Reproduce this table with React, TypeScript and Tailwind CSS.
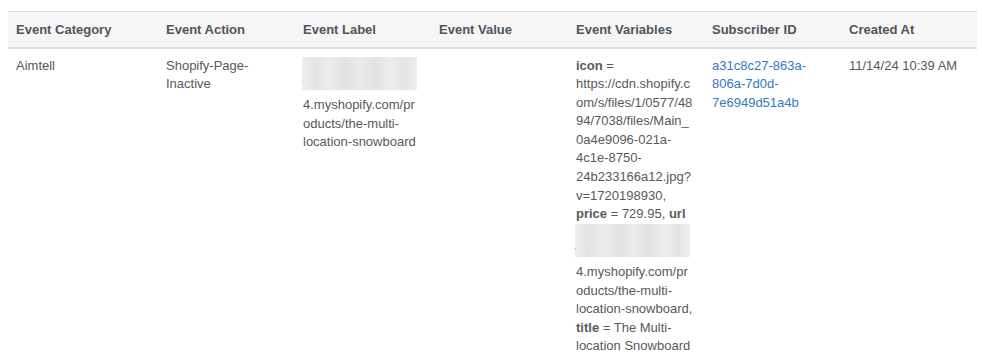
import React from "react";

const Blur = () => (
  <div className="relative h-[39.5px]">
    <div className="absolute left-[-1px] top-[0px] h-[33px] w-[115px] bg-[linear-gradient(90deg,#eeeeee,#e4e4e4_12%,#ececec_24%,#e2e2e2_38%,#eaeaea_50%,#e3e3e3_64%,#ededed_78%,#e4e4e4_90%,#efefef)] blur-[0.6px]" />
    <div className="absolute left-[-1px] top-[24px] h-[1px] w-[1px] bg-[#b5b5b5]" />
  </div>
);

const L = ({ children }: { children: React.ReactNode }) => <div className="whitespace-nowrap">{children}</div>;

export default function App() {
  const th = "text-left align-top font-bold text-[#4f555c] px-2 pt-[9px] pb-[7px]";
  const td = "align-top px-2 pt-2 pb-2";
  return (
    <div
      className="bg-white pl-2 pt-[11px] w-[982px] h-[363px] overflow-hidden text-[13px] leading-[18.57px] text-[#595959]"
      style={{ fontFamily: '"Liberation Sans", Helvetica, Arial, sans-serif' }}
    >
      <table className="w-[969px] table-fixed border-collapse">
        <colgroup>
          <col className="w-[150px]" />
          <col className="w-[137px]" />
          <col className="w-[136px]" />
          <col className="w-[137px]" />
          <col className="w-[136px]" />
          <col className="w-[137px]" />
          <col className="w-[136px]" />
        </colgroup>
        <thead>
          <tr className="bg-[#f6f6f6] border-t border-t-[#dddddd] border-b-2 border-b-[#dddddd]">
            <th className={th}>Event Category</th>
            <th className={th}>Event Action</th>
            <th className={th}>Event Label</th>
            <th className={th}>Event Value</th>
            <th className={th}>Event Variables</th>
            <th className={th}>Subscriber ID</th>
            <th className={th}>Created At</th>
          </tr>
        </thead>
        <tbody>
          <tr>
            <td className={td}>Aimtell</td>
            <td className={td}>
              <L>Shopify-Page-</L>
              <L>Inactive</L>
            </td>
            <td className={td}>
              <Blur />
              <L>4.myshopify.com/pr</L>
              <L>oducts/the-multi-</L>
              <L>location-snowboard</L>
            </td>
            <td className={td}></td>
            <td className={td}>
              <L>
                <b className="font-bold">icon</b> =
              </L>
              <L>https://cdn.shopify.c</L>
              <L>om/s/files/1/0577/48</L>
              <L>94/7038/files/Main_</L>
              <L>0a4e9096-021a-</L>
              <L>4c1e-8750-</L>
              <L>24b233166a12.jpg?</L>
              <L>v=1720198930,</L>
              <L>
                <b className="font-bold">price</b> = 729.95, <b className="font-bold">url</b>
              </L>
              <Blur />
              <L>4.myshopify.com/pr</L>
              <L>oducts/the-multi-</L>
              <L>location-snowboard,</L>
              <L>
                <b className="font-bold">title</b> = The Multi-
              </L>
              <L>location Snowboard</L>
            </td>
            <td className={td}>
              <a className="text-[#3479c4]">
                <L>a31c8c27-863a-</L>
                <L>806a-7d0d-</L>
                <L>7e6949d51a4b</L>
              </a>
            </td>
            <td className={td}>
              <L>11/14/24 10:39 AM</L>
            </td>
          </tr>
        </tbody>
      </table>
    </div>
  );
}
